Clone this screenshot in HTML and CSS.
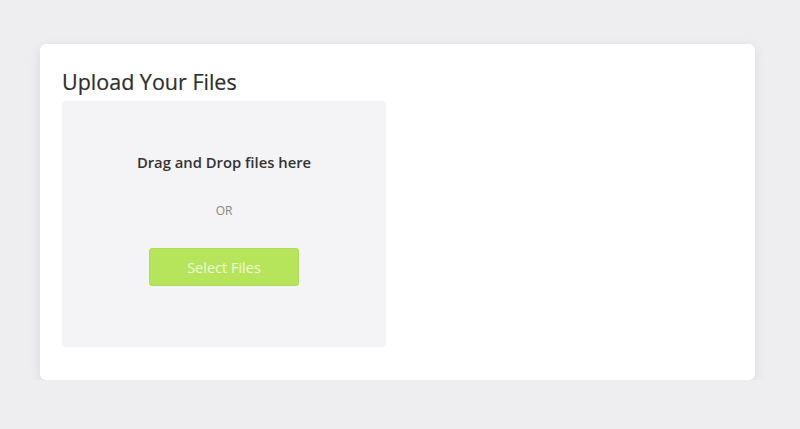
FILE: index.html
```html
<!DOCTYPE html>
<html>
<head>
<meta charset="utf-8">
<link rel="stylesheet" href="styles.css">
</head>
<body>
<div class="page">
  <div class="card">
    <h2 class="title">Upload Your Files</h2>
    <div class="dropzone">
      <p class="drop-text">Drag and Drop files here</p>
      <p class="or">OR</p>
      <button class="select-btn">Select Files</button>
    </div>
  </div>
</div>
</body>
</html>
```

FILE: styles.css
```css
html, body {
  margin: 0;
  padding: 0;
  background: #eeedf0;
  font-family: "Open Sans", "Liberation Sans", sans-serif;
}
.page {
  padding: 44px 45px 0 40px;
}
.card {
  background: #ffffff;
  border-radius: 6px;
  box-shadow: 0 3px 12px rgba(0, 0, 0, 0.09);
  padding: 24px 22px 32px 22px;
  height: 280px;
}
.title {
  margin: 0 0 5px 0;
  font-size: 21.5px;
  font-weight: 400;
  color: #2e2e2e;
  line-height: 28px;
  -webkit-text-stroke: 0.2px #2e2e2e;
}
.dropzone {
  width: 324px;
  height: 246px;
  box-sizing: border-box;
  background: #f4f3f5;
  border-radius: 4px;
  display: flex;
  flex-direction: column;
  align-items: center;
  padding-top: 51px;
}
.drop-text {
  margin: 0;
  font-size: 14.8px;
  font-weight: 600;
  color: #333333;
  line-height: 20px;
}
.or {
  margin: 31px 0 0 0;
  font-size: 12px;
  color: #888888;
  line-height: 16px;
}
.select-btn {
  margin-top: 29px;
  width: 150px;
  height: 38px;
  background: #b6e55c;
  border: 1px solid #aedb58;
  border-radius: 3px;
  color: #eef8dc;
  font-family: "Open Sans", "Liberation Sans", sans-serif;
  font-size: 14.5px;
  padding: 0;
}
```
